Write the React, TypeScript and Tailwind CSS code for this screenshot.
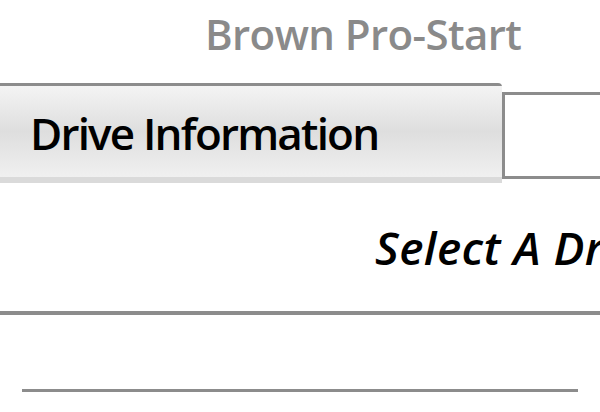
import React from "react";

const font = { fontFamily: '"Open Sans", "Noto Sans", sans-serif' };

const App: React.FC = () => {
  return (
    <div className="w-[600px] h-[412px] bg-white overflow-hidden relative" style={font}>
      {/* Title */}
      <div className="h-[83px] pl-[205px] pt-[13px]">
        <span className="block text-[42px] leading-none font-semibold text-[#8a8a8a] whitespace-nowrap tracking-[-0.6px]">
          Brown Pro-Start
        </span>
      </div>

      {/* Tabs */}
      <div className="flex h-[100px]">
        <div className="w-[502px] h-[100px] border-t-[3px] border-[#8c8c8c] rounded-tr-[4px] flex flex-col">
          <div className="flex-1 bg-gradient-to-b from-[#f4f4f4] via-[#dedede] to-[#f0f0f0] flex items-center pl-[30px] pt-[2px]">
            <span className="text-[44px] leading-none font-semibold text-black whitespace-nowrap tracking-[-1.8px]">
              Drive Information
            </span>
          </div>
          <div className="h-[6px] bg-[#dadada]" />
        </div>
        <div className="flex-1 mt-[9px] h-[87px] border-l-[3px] border-t-[3px] border-b-[3px] border-[#8c8c8c] bg-white" />
      </div>

      {/* Content */}
      <div className="h-[128px] pl-[375px] pt-[41px] whitespace-nowrap">
        <span className="text-[46px] leading-none font-semibold italic text-black tracking-[0.4px]">
          Select A Drive
        </span>
      </div>
      <div className="h-[4px] bg-[#8c8c8c]" />
      <div className="h-[74px]" />
      <div className="mx-[22px] h-[3px] bg-[#8c8c8c]" />
    </div>
  );
};

export default App;
